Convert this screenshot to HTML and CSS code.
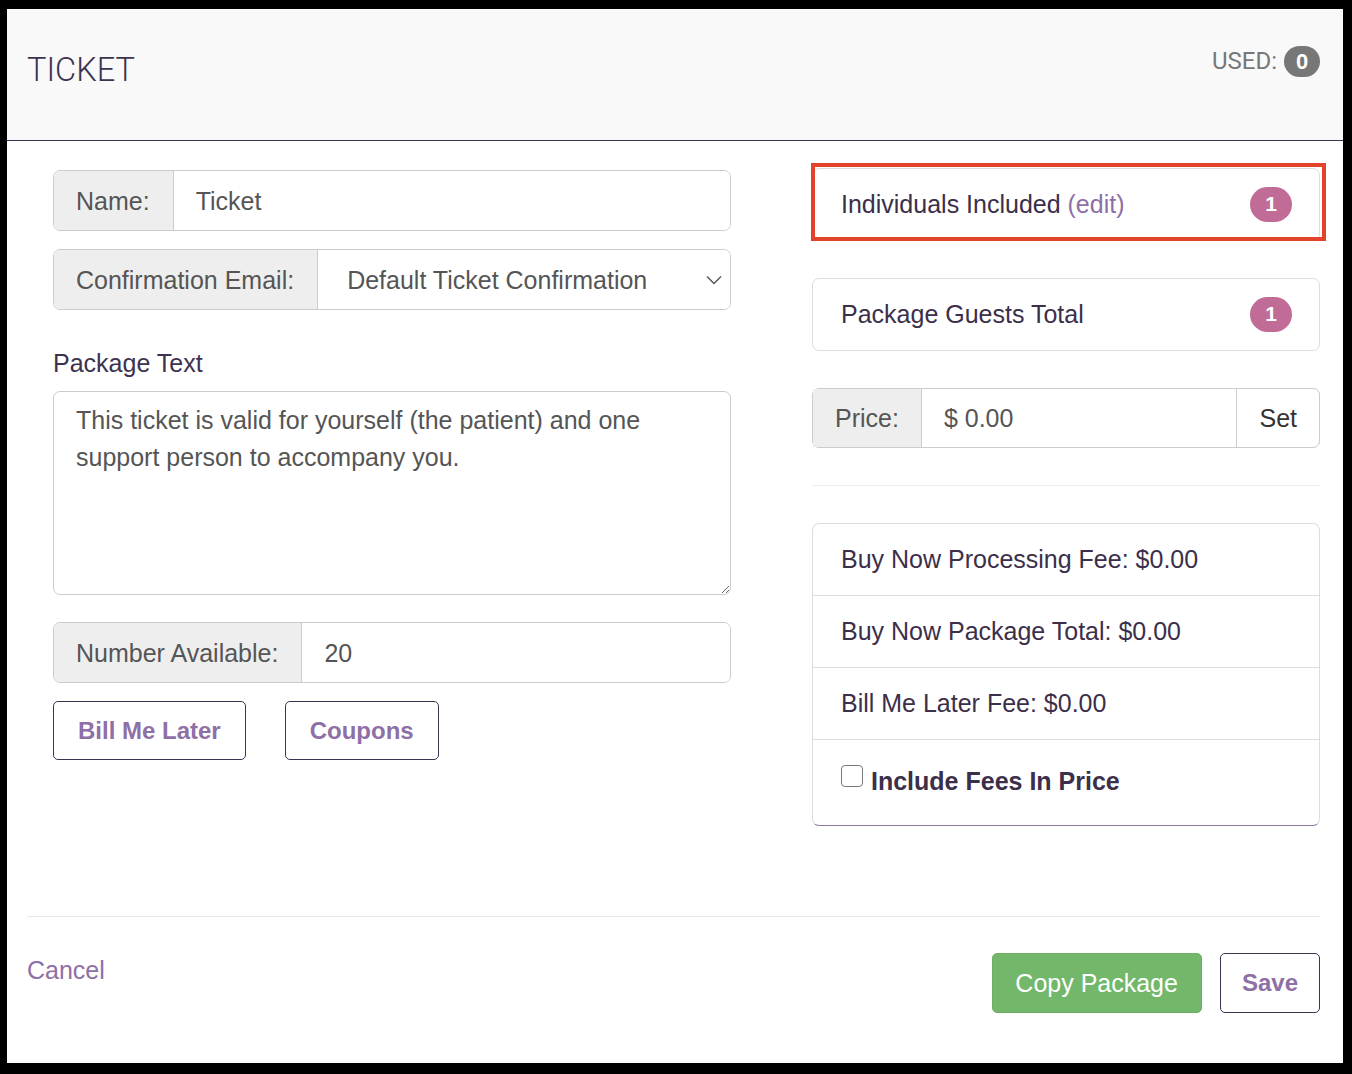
FILE: index.html
```html
<!DOCTYPE html>
<html lang="en">
<head>
  <meta charset="UTF-8">
  <meta name="viewport" content="width=device-width, initial-scale=1.0">
  <title>Ticket</title>
  <link rel="stylesheet" href="styles.css">
</head>
<body>
  <div class="modal">
    <header class="modal-header">
      <h4 class="modal-title">TICKET</h4>
      <div class="used">USED: <span class="badge badge-gray">0</span></div>
    </header>

    <div class="modal-body">
      <div class="col-left">
        <div class="input-group">
          <span class="addon">Name:</span>
          <input class="field" type="text" value="Ticket">
        </div>

        <div class="input-group">
          <span class="addon">Confirmation Email:</span>
          <span class="select-wrap">
            <select class="field select">
              <option>Default Ticket Confirmation</option>
            </select>
            <svg class="chevron" width="16" height="10" viewBox="0 0 16 10">
              <polyline points="1,1.5 8,8.5 15,1.5" fill="none" stroke="#555" stroke-width="1.4"/>
            </svg>
          </span>
        </div>

        <label class="text-label">Package Text</label>
        <textarea class="textarea">This ticket is valid for yourself (the patient) and one support person to accompany you.</textarea>

        <div class="input-group number">
          <span class="addon">Number Available:</span>
          <input class="field" type="text" value="20">
        </div>

        <div class="btn-row">
          <button class="btn btn-outline">Bill Me Later</button>
          <button class="btn btn-outline">Coupons</button>
        </div>
      </div>

      <div class="col-right">
        <div class="panel panel-marked">
          <span>Individuals Included <a class="link" href="#">(edit)</a></span>
          <span class="badge badge-pink">1</span>
        </div>

        <div class="panel">
          <span>Package Guests Total</span>
          <span class="badge badge-pink">1</span>
        </div>

        <div class="input-group price">
          <span class="addon">Price:</span>
          <input class="field" type="text" value="$ 0.00">
          <button class="set-btn">Set</button>
        </div>

        <hr class="divider">

        <ul class="list-group">
          <li class="list-item">Buy Now Processing Fee: $0.00</li>
          <li class="list-item">Buy Now Package Total: $0.00</li>
          <li class="list-item">Bill Me Later Fee: $0.00</li>
          <li class="list-item check-item">
            <label class="check-label"><input type="checkbox" class="check"> Include Fees In Price</label>
          </li>
        </ul>
      </div>
    </div>

    <footer class="modal-footer">
      <a class="cancel" href="#">Cancel</a>
      <div class="footer-buttons">
        <button class="btn btn-green">Copy Package</button>
        <button class="btn btn-outline btn-save">Save</button>
      </div>
    </footer>
  </div>
</body>
</html>
```

FILE: styles.css
```css
* {
  box-sizing: border-box;
}

body {
  margin: 0;
  padding: 9px 9px 11px 7px;
  background: #000;
  font-family: "Liberation Sans", Arial, sans-serif;
  font-size: 25px;
  line-height: 36px;
  color: #3b2f4a;
}

.modal {
  background: #fff;
  height: 1054px;
}

/* header */
.modal-header {
  display: flex;
  justify-content: space-between;
  align-items: flex-start;
  height: 132px;
  padding: 0 23px 0 20px;
  background: #f9f9f9;
  border-bottom: 1px solid #3d3350;
}

.modal-title {
  margin: 44px 0 0;
  font-family: Roboto, sans-serif;
  font-weight: 300;
  font-size: 32.5px;
  line-height: 34px;
  color: #3d3350;
}

.used {
  display: flex;
  align-items: center;
  gap: 7px;
  margin-top: 37px;
  font-family: Roboto, sans-serif;
  font-size: 24px;
  line-height: 31px;
  color: #777;
}

.badge {
  display: inline-flex;
  align-items: center;
  justify-content: center;
  font-family: "Liberation Sans", Arial, sans-serif;
  font-weight: bold;
  color: #fff;
}

.badge-gray {
  width: 36px;
  height: 31px;
  border-radius: 16px;
  background: #777;
  font-size: 22px;
}

.badge-pink {
  width: 42px;
  height: 35px;
  border-radius: 18px;
  background: #c06c97;
  font-size: 21px;
}

/* body */
.modal-body {
  display: grid;
  grid-template-columns: 678px 508px;
  column-gap: 81px;
  align-items: start;
  padding: 27px 0 0 46px;
  height: 775px;
}

.col-left {
  padding-top: 2px;
}

.input-group {
  display: flex;
  height: 61px;
  margin-bottom: 18px;
  border: 1px solid #ccc;
  border-radius: 7px;
  overflow: hidden;
}

.addon {
  display: flex;
  align-items: center;
  padding: 0 23px 0 22px;
  background: #eee;
  border-right: 1px solid #ccc;
  color: #555;
  white-space: nowrap;
}

.field {
  flex: 1;
  min-width: 0;
  border: none;
  padding: 0 22px;
  font: inherit;
  color: #555;
  background: #fff;
  outline: none;
}

.select-wrap {
  position: relative;
  flex: 1;
  display: flex;
}

.select {
  appearance: none;
  padding-left: 29px;
}

.chevron {
  position: absolute;
  right: 8px;
  top: 25px;
}

.text-label {
  display: block;
  margin: 35px 0 10px;
  color: #3d3350;
}

.textarea {
  display: block;
  width: 100%;
  height: 204px;
  padding: 10px 22px;
  border: 1px solid #ccc;
  border-radius: 7px;
  font: inherit;
  line-height: 37px;
  color: #555;
  resize: vertical;
  outline: none;
}

.input-group.number {
  margin-top: 27px;
}

.btn-row {
  display: flex;
  gap: 39px;
}

.btn {
  height: 59px;
  padding: 0 24px;
  border-radius: 5px;
  font-family: inherit;
  font-size: 25px;
  cursor: pointer;
}

.btn-outline {
  background: #fff;
  border: 1px solid #3d3350;
  color: #8e6fa6;
  font-weight: bold;
  font-size: 24px;
}

.btn-green {
  height: 60px;
  padding: 0 23px 0 22px;
  background: #72b76a;
  border: 1px solid #6cb064;
  color: #fff;
}

/* right column */
.panel {
  position: relative;
  display: flex;
  justify-content: space-between;
  align-items: center;
  padding: 17px 27px 18px 28px;
  margin-bottom: 37px;
  border: 1px solid #ddd;
  border-radius: 7px;
}

.panel-marked::after {
  content: "";
  position: absolute;
  top: -6px;
  left: -2px;
  right: -7px;
  bottom: -1px;
  border: 4px solid #e2432a;
}

.link {
  color: #8e6fa6;
  text-decoration: none;
}

.input-group.price {
  height: 60px;
  margin-bottom: 0;
  overflow: visible;
  border-radius: 7px;
}

.input-group.price .addon {
  padding: 0 22px;
}

.set-btn {
  margin: -1px -1px -1px 0;
  padding: 0 22px;
  background: #fff;
  border: 1px solid #ccc;
  border-radius: 0 7px 7px 0;
  font: inherit;
  color: #333;
}

.divider {
  margin: 37px 0;
  border: none;
  border-top: 1px solid #eee;
}

.list-group {
  margin: 0;
  padding: 0;
  list-style: none;
  border: 1px solid #ddd;
  border-bottom-color: #8a7a9c;
  border-radius: 7px;
}

.list-item {
  padding: 17px 28px 18px;
  border-top: 1px solid #ddd;
}

.list-item:first-child {
  border-top: none;
}

.check-item {
  padding: 23px 28px 26px;
}

.check-label {
  display: flex;
  align-items: flex-start;
  gap: 8px;
  font-weight: bold;
}

.check {
  appearance: none;
  width: 22px;
  height: 22px;
  margin: 2px 0 0;
  border: 1.5px solid #777;
  border-radius: 4px;
  background: #fff;
}

/* footer */
.modal-footer {
  display: flex;
  justify-content: space-between;
  align-items: flex-start;
  margin: 0 23px 0 20px;
  padding-top: 36px;
  border-top: 1px solid #e8e8e8;
}

.cancel {
  margin-top: -1px;
  color: #8e6fa6;
  text-decoration: none;
}

.footer-buttons {
  display: flex;
  gap: 18px;
}

.btn-save {
  height: 60px;
  padding: 0 21px;
}
```
